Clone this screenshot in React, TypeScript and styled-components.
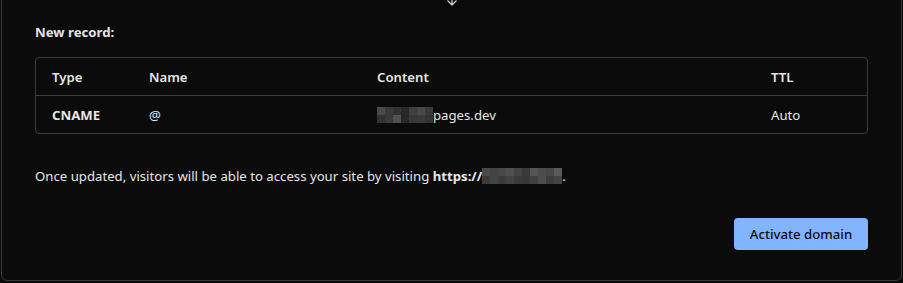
import React from 'react'
import styled, { createGlobalStyle } from 'styled-components'

const GlobalStyle = createGlobalStyle`
  html, body {
    margin: 0;
    padding: 0;
    background: #0a0a0a;
  }
  body {
    font-family: 'Segoe UI', 'Noto Sans', sans-serif;
    color: #e8e8e8;
  }
`

const Panel = styled.div`
  position: relative;
  margin: -20px 1px 0 1px;
  height: 301px;
  box-sizing: border-box;
  border: 1px solid #3a3a3a;
  border-radius: 0 0 6px 6px;
  background: #0b0b0b;
  padding: 41px 33px 0 33px;
  display: flex;
  flex-direction: column;
`

const ArrowMark = styled.div`
  position: absolute;
  top: 10px;
  left: 442px;
  width: 16px;
  height: 16px;
  color: #c8c8c8;
`

const Label = styled.div`
  font-size: 13.2px;
  font-weight: 700;
  color: #e4e4e4;
  line-height: 20px;
  margin-bottom: 15px;
`

const Table = styled.div`
  border: 1px solid #3a3a3a;
  border-radius: 4px;
  width: 833px;
  box-sizing: border-box;
`

const Row = styled.div<{ $last?: boolean }>`
  display: grid;
  grid-template-columns: 97px 228px 394px 1fr;
  height: 37px;
  align-items: center;
  border-bottom: ${p => (p.$last ? 'none' : '1px solid #3a3a3a')};
  font-size: 13.2px;
  color: #e6e6e6;
`

const Cell = styled.div<{ $bold?: boolean }>`
  padding-left: 16px;
  font-weight: ${p => (p.$bold ? 700 : 400)};
  display: flex;
  align-items: center;
  white-space: nowrap;
`

const HeadCell = styled(Cell)`
  font-weight: 600;
`

const Blur = styled.span<{ $cols: number }>`
  display: inline-grid;
  grid-template-columns: repeat(${p => p.$cols}, 8px);
  grid-auto-rows: 8px;
  vertical-align: middle;
`

const Pixel = styled.span<{ $c: string }>`
  background: ${p => p.$c};
`

const Note = styled.p`
  margin: 32px 0 0 0;
  font-size: 13.2px;
  line-height: 20px;
  color: #e6e6e6;
  display: flex;
  align-items: center;
  white-space: pre;
  b {
    font-weight: 700;
  }
`

const Footer = styled.div`
  display: flex;
  justify-content: flex-end;
  width: 833px;
  margin-top: 32px;
`

const Button = styled.button`
  background: #82b5ff;
  color: #0d0d0d;
  border: none;
  border-radius: 4px;
  height: 32px;
  width: 134px;
  padding: 0;
  font-family: inherit;
  font-size: 13.2px;
  font-weight: 500;
`

const contentPixels = [
  '#4a4848', '#3b3a36', '#333333', '#2a2a2a', '#3c4048', '#4a4846', '#3a3a3a',
  '#333333', '#3a3a3a', '#505050', '#2a2826', '#383838', '#3a3a3a', '#333333',
]

const urlPixels = [
  '#4a4a4a', '#444444', '#4a4848', '#505050', '#444444', '#383838', '#555555', '#4c4c4c', '#484848', '#5a5a5a',
  '#3a3a3a', '#444444', '#3c3a3a', '#404448', '#3a3a3a', '#383838', '#404040', '#4e4e4e', '#3c3c3c', '#444444',
]

const Pixelated: React.FC<{ colors: string[]; cols: number }> = ({ colors, cols }) => (
  <Blur $cols={cols}>
    {colors.map((c, i) => (
      <Pixel key={i} $c={c} />
    ))}
  </Blur>
)

export default function App() {
  return (
    <>
      <GlobalStyle />
      <Panel>
        <ArrowMark>
          <svg width="16" height="16" viewBox="0 0 16 16" fill="none" stroke="currentColor" strokeWidth="1.3">
            <path d="M8 1v12M3.5 8.5L8 13l4.5-4.5" />
          </svg>
        </ArrowMark>
        <Label>New record:</Label>
        <Table>
          <Row>
            <HeadCell>Type</HeadCell>
            <HeadCell>Name</HeadCell>
            <HeadCell>Content</HeadCell>
            <HeadCell>TTL</HeadCell>
          </Row>
          <Row $last>
            <Cell $bold>CNAME</Cell>
            <Cell>@</Cell>
            <Cell>
              <Pixelated colors={contentPixels} cols={7} />
              pages.dev
            </Cell>
            <Cell>Auto</Cell>
          </Row>
        </Table>
        <Note>
          Once updated, visitors will be able to access your site by visiting <b>https://</b>
          <Pixelated colors={urlPixels} cols={10} />.
        </Note>
        <Footer>
          <Button>Activate domain</Button>
        </Footer>
      </Panel>
    </>
  )
}
